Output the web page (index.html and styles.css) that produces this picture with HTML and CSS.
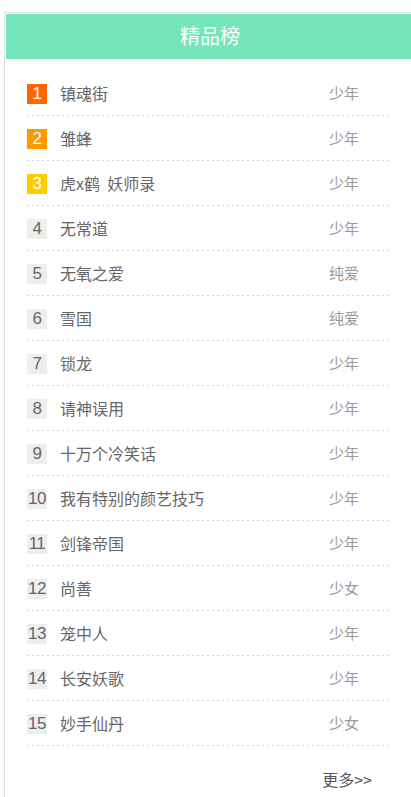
FILE: index.html
```html
<!DOCTYPE html>
<html lang="zh-CN">
<head>
<meta charset="utf-8">
<title>精品榜</title>
<link rel="stylesheet" href="styles.css">
</head>
<body>
<div class="board">
  <div class="board-head">精品榜</div>
  <ul class="rank">
    <li class="row"><span class="num n1">1</span><span class="title">镇魂街</span><span class="cat">少年</span></li>
    <li class="row"><span class="num n2">2</span><span class="title">雏蜂</span><span class="cat">少年</span></li>
    <li class="row"><span class="num n3">3</span><span class="title">虎x鹤&nbsp; 妖师录</span><span class="cat">少年</span></li>
    <li class="row"><span class="num">4</span><span class="title">无常道</span><span class="cat">少年</span></li>
    <li class="row"><span class="num">5</span><span class="title">无氧之爱</span><span class="cat">纯爱</span></li>
    <li class="row"><span class="num">6</span><span class="title">雪国</span><span class="cat">纯爱</span></li>
    <li class="row"><span class="num">7</span><span class="title">锁龙</span><span class="cat">少年</span></li>
    <li class="row"><span class="num">8</span><span class="title">请神误用</span><span class="cat">少年</span></li>
    <li class="row"><span class="num">9</span><span class="title">十万个冷笑话</span><span class="cat">少年</span></li>
    <li class="row"><span class="num">10</span><span class="title">我有特别的颜艺技巧</span><span class="cat">少年</span></li>
    <li class="row"><span class="num">11</span><span class="title">剑锋帝国</span><span class="cat">少年</span></li>
    <li class="row"><span class="num">12</span><span class="title">尚善</span><span class="cat">少女</span></li>
    <li class="row"><span class="num">13</span><span class="title">笼中人</span><span class="cat">少年</span></li>
    <li class="row"><span class="num">14</span><span class="title">长安妖歌</span><span class="cat">少年</span></li>
    <li class="row"><span class="num">15</span><span class="title">妙手仙丹</span><span class="cat">少女</span></li>
  </ul>
  <div class="more"><a class="more-link" href="#">更多&gt;&gt;</a></div>
</div>
</body>
</html>
```

FILE: styles.css
```css
html, body {
  margin: 0;
  padding: 0;
  overflow: hidden;
  background: #fff;
}
body {
  padding: 12px 0 0 4px;
  font-family: "Noto Sans CJK SC", "Liberation Sans", sans-serif;
}
.board {
  width: 410px;
  border-top: 1px solid #ddd;
  border-left: 1px solid #ddd;
  padding: 1px 0 0 1px;
  height: 800px;
  box-sizing: border-box;
}
.board-head {
  height: 45px;
  background: #75e5bc;
  color: #fff;
  font-size: 20px;
  line-height: 44px;
  text-align: center;
}
.rank {
  list-style: none;
  margin: 0;
  padding: 12px 0 0 21px;
  width: 362px;
}
.row {
  display: flex;
  align-items: center;
  height: 44px;
  padding-bottom: 1px;
  background-image: repeating-linear-gradient(to right, #d4d4dc 0, #d4d4dc 2px, transparent 2px, transparent 5px);
  background-size: 100% 1px;
  background-position: left bottom;
  background-repeat: no-repeat;
}
.num {
  width: 20px;
  height: 20px;
  margin-top: 1px;
  background: #eee;
  color: #666;
  font-family: "Liberation Sans", Arial, sans-serif;
  font-size: 17px;
  line-height: 20px;
  text-align: center;
  flex: none;
  letter-spacing: -0.5px;
  white-space: nowrap;
  overflow: hidden;
}
.n1 { background: #ff6600; color: #fff; }
.n2 { background: #ff9900; color: #fff; }
.n3 { background: #ffcc00; color: #fff; }
.title {
  flex: 1;
  margin-left: 13px;
  font-size: 16px;
  color: #666;
  line-height: 20px;
  white-space: nowrap;
}
.cat {
  width: 60px;
  font-size: 15px;
  color: #999;
  line-height: 20px;
  flex: none;
}
.more {
  width: 362px;
  padding: 21px 0 0 21px;
  text-align: right;
}
.more-link {
  display: inline-block;
  margin-right: 17px;
  font-size: 16px;
  color: #555;
  text-decoration: none;
  line-height: 20px;
}
```
